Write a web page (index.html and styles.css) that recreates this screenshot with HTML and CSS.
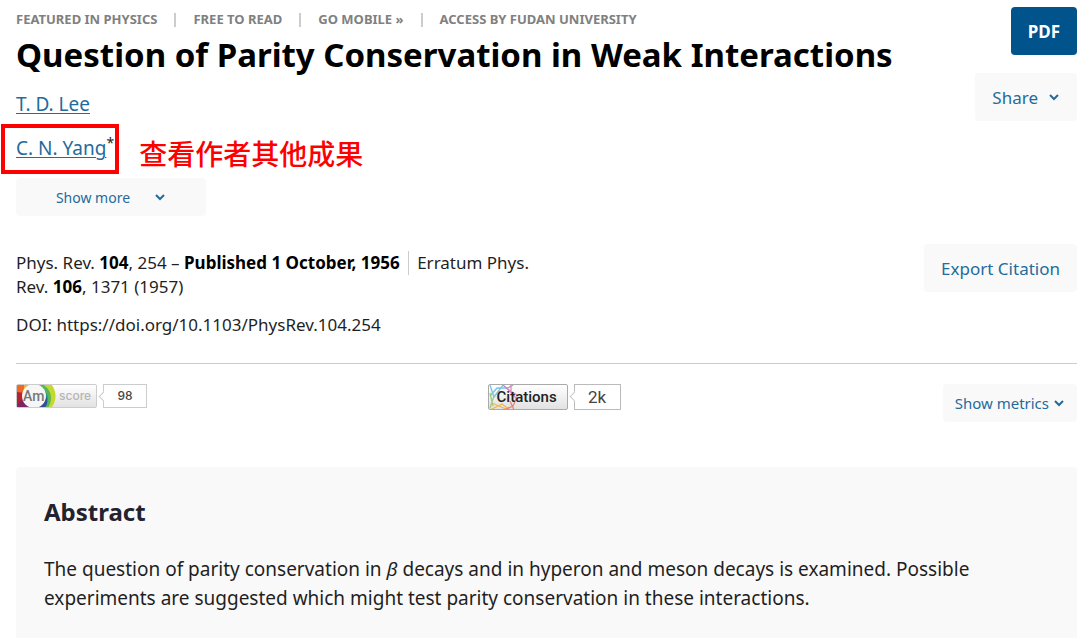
FILE: index.html
```
<!DOCTYPE html>
<html lang="en">
<head>
    <meta charset="utf-8">
    <meta name="viewport" content="width=device-width, initial-scale=1">
    <title>Question of Parity Conservation in Weak Interactions</title>
    <link rel="stylesheet" href="styles.css">
</head>
<body>
    <main class="article">
        <header class="article-header">
            <div class="article-info">
                <ul class="labels">
                    <li>FEATURED IN PHYSICS</li>
                    <li>FREE TO READ</li>
                    <li>GO MOBILE »</li>
                    <li>ACCESS BY FUDAN UNIVERSITY</li>
                </ul>
                <h1>Question of Parity Conservation in Weak Interactions</h1>
                <div class="author"><a href="#">T. D. Lee</a></div>
                <div class="author-row">
                    <div class="author marked"><a href="#">C. N. Yang</a><sup>*</sup></div>
                    <span class="note" lang="zh-CN">查看作者其他成果</span>
                </div>
                <button class="btn small show-more" type="button">
                    Show more
                    <svg class="chevron" viewBox="0 0 12 8"><path d="M2 2l4 4 4-4"/></svg>
                </button>
            </div>
            <div class="article-tools">
                <button class="btn primary" type="button">PDF</button>
                <button class="btn" type="button">
                    Share
                    <svg class="chevron" viewBox="0 0 12 8"><path d="M2 2l4 4 4-4"/></svg>
                </button>
            </div>
        </header>

        <section class="publication">
            <div class="publication-text">
                <p>Phys. Rev. <b>104</b>, 254 – <b class="published">Published 1 October, 1956</b> Erratum Phys. Rev. <b>106</b>, 1371 (1957)</p>
                <p>DOI: https://doi.org/10.1103/PhysRev.104.254</p>
            </div>
            <button class="btn" type="button">Export Citation</button>
        </section>

        <section class="metrics">
            <div class="badge">
                <span class="badge-label">
                    <svg class="altmetric-art" viewBox="0 0 42 24">
                        <path fill="#f06a25" d="M0 0h12v12H0z"/>
                        <path fill="#b6232f" d="M0 8l9 1v15H0z"/>
                        <path fill="#782869" d="M0 24l5-8 12 8z"/>
                        <path fill="#f6b233" d="M8 0h12v6H8z"/>
                        <path fill="#c5d92d" d="M18 0h17c6 7 6 17 0 24h-8z"/>
                        <path fill="#54b55a" d="M18 0h8c10 6 11 15 6 24h-9z"/>
                        <path fill="#29898b" d="M27 5c6 5 6 13 2 19h-8z"/>
                        <path fill="#344d92" d="M16 24l14-11c2 5 1 8-2 11z"/>
                        <circle cx="18" cy="12" r="12" fill="#f6f6f6"/>
                    </svg>
                    <span class="am">Am</span>
                    <span class="score">score</span>
                </span>
                <span class="badge-count">98</span>
            </div>
            <div class="badge citations">
                <span class="badge-label">
                    <svg class="citations-art" viewBox="0 0 32 26">
                        <path stroke="#58b7dd" d="M1 0l4 12L14 0M1 11L8 3h11"/>
                        <path stroke="#a46fc0" d="M14 0l8 7M19 3l5-3"/>
                        <path stroke="#e36aa9" d="M22 0v8l5 5M18 4l10 6"/>
                        <path stroke="#8bc565" d="M1 8l3 13M5 11L1 23"/>
                        <path stroke="#efac35" d="M1 25l12-6 8 6M3 18l14 6"/>
                        <path stroke="#e66d5b" d="M28 12l-4 9-9 4M21 16l4 9"/>
                    </svg>
                    <span class="citations-text">Citations</span>
                </span>
                <span class="badge-count">2k</span>
            </div>
            <button class="btn small" type="button">
                Show metrics
                <svg class="chevron" viewBox="0 0 12 8"><path d="M2 2l4 4 4-4"/></svg>
            </button>
        </section>

        <section class="abstract">
            <h2>Abstract</h2>
            <p>The question of parity conservation in <i>β</i> decays and in hyperon and meson decays is examined. Possible experiments are suggested which might test parity conservation in these interactions.</p>
        </section>
    </main>
</body>
</html>
```

FILE: styles.css
```
* {
    box-sizing: border-box;
}
body {
    margin: 0;
    font-family: "Noto Sans", sans-serif;
    font-size: 17px;
    line-height: 24px;
    color: #1f1f1f;
    background-color: #fff;
}
p, h1, h2, ul {
    margin: 0;
    padding: 0;
}
.article {
    padding: 7px 3px 0 16px;
}
.article-header {
    display: flex;
    justify-content: space-between;
    align-items: flex-start;
}
.labels {
    display: flex;
    list-style: none;
    font-size: 13px;
    font-weight: bold;
    line-height: 25px;
    color: #808080;
}
.labels li {
    display: flex;
    align-items: center;
}
.labels li + li::before {
    content: "";
    width: 2px;
    height: 14px;
    margin: 0 17px;
    background-color: #ccc;
}
h1 {
    font-size: 33px;
    line-height: 46px;
    color: #000;
}
.author {
    font-size: 19px;
    line-height: 24px;
    margin-top: 14px;
}
.author a {
    color: #246b9c;
    text-decoration-thickness: 1px;
    text-underline-offset: 2px;
}
.author sup {
    font-size: 14px;
    line-height: 0;
}
.author-row {
    display: flex;
    align-items: center;
    gap: 20px;
    margin: 8px 0 4px -15px;
}
.marked {
    margin: 0;
    padding: 8px 1px 10px 11px;
    border: 4px solid #f00;
}
.note {
    font-family: "Noto Sans CJK SC", sans-serif;
    font-size: 28px;
    font-weight: 500;
    line-height: 32px;
    color: #f00;
    padding-top: 8px;
}
.btn {
    display: flex;
    align-items: center;
    justify-content: center;
    gap: 10px;
    height: 48px;
    padding: 0 17px;
    border: none;
    border-radius: 4px;
    background-color: #f9f9f9;
    color: #246b9c;
    font-family: inherit;
    font-size: 17px;
    cursor: pointer;
}
.btn.primary {
    background-color: #00538b;
    color: #fff;
    font-weight: bold;
}
.btn.small {
    height: 38px;
    padding: 0 12px;
    font-size: 15px;
    gap: 4px;
}
.btn.show-more {
    width: 190px;
    font-size: 14px;
    gap: 24px;
}
.chevron {
    width: 12px;
    height: 8px;
    fill: none;
    stroke: currentColor;
    stroke-width: 2;
}
.article-tools {
    display: flex;
    flex-direction: column;
    align-items: flex-end;
    gap: 18px;
}
.publication {
    display: flex;
    justify-content: space-between;
    align-items: flex-start;
    padding: 28px 0 26px;
    border-bottom: 1px solid #ccc;
}
.publication-text {
    width: 50%;
    padding-top: 7px;
}
.publication-text p + p {
    margin-top: 14px;
}
.publication b {
    color: #000;
}
.published {
    display: inline-block;
    padding-right: 8px;
    margin-right: 4px;
    border-right: 1px solid #ccc;
}
.metrics {
    display: grid;
    grid-template-columns: 4fr 5fr;
    align-items: start;
    padding: 20px 0 45px;
}
.metrics .btn {
    grid-area: 1 / 2;
    justify-self: end;
}
.metrics .citations {
    grid-area: 1 / 2;
}
.badge {
    display: flex;
    gap: 6px;
    font-family: Roboto, sans-serif;
    font-size: 15px;
}
.badge-label {
    position: relative;
    display: flex;
    align-items: center;
    width: 81px;
    height: 24px;
    border: 1px solid #ccc;
    border-radius: 2px;
    background: linear-gradient(#fff, #e2e2e2);
    overflow: hidden;
}
.altmetric-art {
    position: absolute;
    left: -1px;
    top: -1px;
    width: 42px;
    height: 24px;
}
.am {
    position: relative;
    width: 42px;
    padding-left: 6px;
    font-size: 14px;
    font-weight: 500;
    color: #777;
}
.score {
    font-family: Inter, sans-serif;
    font-size: 12px;
    font-weight: 500;
    color: #b5b5b5;
}
.badge-count {
    position: relative;
    display: flex;
    align-items: center;
    justify-content: center;
    width: 44px;
    height: 24px;
    border: 1px solid #ccc;
    background-color: #fff;
    font-family: Inter, sans-serif;
    font-size: 12px;
    font-weight: 500;
    color: #444;
}
.badge-count::before {
    content: "";
    position: absolute;
    left: -4px;
    top: 8px;
    width: 6px;
    height: 6px;
    border: 1px solid #ccc;
    border-width: 0 0 1px 1px;
    background-color: #fff;
    transform: rotate(45deg);
}
.citations .badge-label {
    width: 80px;
    height: 26px;
    border-color: #aaa;
}
.citations-art {
    position: absolute;
    left: 0;
    top: 0;
    width: 32px;
    height: 26px;
    fill: none;
    stroke-width: 1.3;
    opacity: 0.8;
}
.citations-text {
    position: relative;
    padding-left: 8px;
    font-weight: 500;
    color: #222;
}
.citations .badge-count {
    width: 47px;
    height: 26px;
    border-color: #bbb;
    font-family: Roboto, sans-serif;
    font-size: 17px;
    font-weight: normal;
}
.abstract {
    padding: 27px 28px 40px;
    border-radius: 4px;
    background-color: #f9f9f9;
}
.abstract h2 {
    font-size: 24px;
    line-height: 35px;
    color: #222230;
}
.abstract p {
    margin-top: 26px;
    font-size: 19px;
    line-height: 29px;
}
```
